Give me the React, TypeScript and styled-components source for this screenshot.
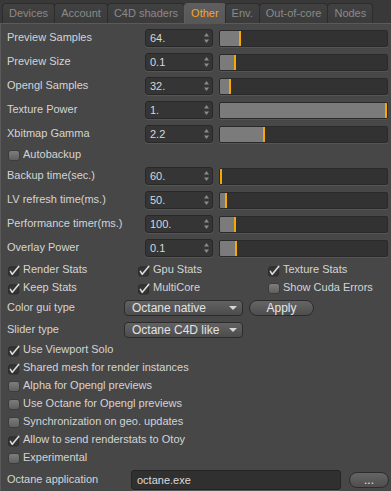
import React from 'react';
import styled, { createGlobalStyle } from 'styled-components';

const Global = createGlobalStyle`
  html, body { margin: 0; padding: 0; background: #474747; }
  body { font-family: "Liberation Sans", Arial, Helvetica, sans-serif; font-size: 11px; }
  * { box-sizing: border-box; }
`;

const Frame = styled.div`
  width: 391px;
  height: 491px;
  overflow: hidden;
  display: flex;
  flex-direction: column;
  background: #474747;
`;

const TabBar = styled.div`
  height: 24px;
  flex: none;
  display: flex;
  align-items: flex-end;
  padding-left: 2px;
  background: #393939;
  border-bottom: 1px solid #5a5a5a;
`;

const Tab = styled.div<{ $active?: boolean }>`
  height: ${p => (p.$active ? 21 : 20)}px;
  margin-bottom: ${p => (p.$active ? -1 : 0)}px;
  padding: 0 6px;
  border: 1px solid ${p => (p.$active ? '#5e5e5e' : '#2c2c2c')};
  border-bottom: 0;
  border-radius: 4px 4px 0 0;
  background: ${p => (p.$active ? 'linear-gradient(#5e5e5e, #575757)' : 'linear-gradient(#414141, #3b3b3b)')};
  color: ${p => (p.$active ? '#f6a623' : '#8a8a8a')};
  font-size: 11px;
  line-height: 19px;
  white-space: nowrap;
  & + & { margin-left: -1px; }
`;

const Panel = styled.div`
  flex: 1;
  display: flex;
  flex-direction: column;
  padding: 2px 4px 0 6px;
  border-left: 1px solid #5a5a5a;
`;

const Label = styled.span`
  color: #d4d4d4;
  white-space: nowrap;
  padding-bottom: 3px;
`;

const SliderRowBox = styled.div`
  height: 24px;
  display: grid;
  grid-template-columns: 138px 68px 175px;
  align-items: center;
`;

const NumberBox = styled.div`
  height: 18px;
  display: flex;
  align-items: center;
  justify-content: space-between;
  padding: 0 3px 0 4px;
  background: #353535;
  border: 1px solid #282828;
  border-radius: 3px;
  box-shadow: 0 1px 0 #555555;
  color: #d8d8d8;
`;

const Track = styled.div`
  margin-left: 6px;
  height: 17px;
  width: 169px;
  background: #323232;
  border: 1px solid #2a2a2a;
  border-radius: 2px;
  box-shadow: 0 1px 0 #555555;
  overflow: hidden;
  display: flex;
`;

const Fill = styled.div`
  height: 100%;
  background: #7b7b7b;
  border-right: 2px solid #f7a900;
`;

const CheckRowBox = styled.div`
  height: 18px;
  display: flex;
  align-items: center;
  gap: 3px;
  padding-left: 1px;
`;

const CheckGrid = styled.div`
  margin-top: 1px;
  display: grid;
  grid-template-columns: 130px 130px 120px;
`;

const BoxUnchecked = styled.span`
  width: 12px;
  height: 11px;
  border-radius: 3px;
  background: linear-gradient(#7d7d7d, #5f5f5f);
  border: 1px solid #3c3c3c;
  flex: none;
`;

const BoxChecked = styled.span`
  width: 12px;
  height: 11px;
  flex: none;
  display: flex;
`;

const ComboRowBox = styled.div`
  height: 22px;
  display: grid;
  grid-template-columns: 117px 119px 71px;
  align-items: center;
`;

const Dropdown = styled.div`
  height: 16px;
  display: flex;
  align-items: center;
  justify-content: space-between;
  padding: 0 5px 0 7px;
  background: linear-gradient(#626262, #4c4c4c);
  border: 1px solid #2c2c2c;
  border-radius: 4px;
  color: #e2e2e2;
  font-size: 12px;
`;

const PillButton = styled.div<{ $w: number; $gap: number }>`
  width: ${p => p.$w}px;
  margin-left: ${p => p.$gap}px;
  height: 16px;
  display: flex;
  align-items: center;
  justify-content: center;
  background: linear-gradient(#656565, #4e4e4e);
  border: 1px solid #2c2c2c;
  border-radius: 8px;
  color: #e6e6e6;
  font-size: 12px;
`;

const AppRowBox = styled.div`
  height: 26px;
  display: grid;
  grid-template-columns: 124px 210px 48px;
  align-items: center;
`;

const TextField = styled.div`
  height: 20px;
  display: flex;
  align-items: center;
  padding-left: 5px;
  background: #303030;
  border: 1px solid #242424;
  border-radius: 3px;
  box-shadow: 0 1px 0 #555555;
  color: #dcdcdc;
`;

const Spinner = () => (
  <svg width="5" height="10" viewBox="0 0 5 10">
    <path d="M2.5 0 L5 3.5 L0 3.5 Z" fill="#8a8a8a" />
    <path d="M0 6.5 L5 6.5 L2.5 10 Z" fill="#8a8a8a" />
  </svg>
);

const Arrow = () => (
  <svg width="8" height="4" viewBox="0 0 8 4">
    <path d="M0 0 L8 0 L4 4 Z" fill="#d6d6d6" />
  </svg>
);

const Check: React.FC<{ on: boolean }> = ({ on }) =>
  on ? (
    <BoxChecked>
      <svg width="13" height="12" viewBox="0 0 13 12">
        <rect x="0.5" y="1.5" width="11" height="10" rx="2.5" fill="#343434" stroke="#2a2a2a" />
        <path d="M2.6 6.4 L4.6 9.6 L11.6 1" stroke="#dedede" strokeWidth="1.7" fill="none" strokeLinecap="round" strokeLinejoin="round" />
      </svg>
    </BoxChecked>
  ) : (
    <BoxUnchecked />
  );

const CheckItem: React.FC<{ on: boolean; label: string }> = ({ on, label }) => (
  <CheckRowBox>
    <Check on={on} />
    <Label>{label}</Label>
  </CheckRowBox>
);

const SliderRow: React.FC<{ label: string; value: string; fill: number }> = ({ label, value, fill }) => (
  <SliderRowBox>
    <Label>{label}</Label>
    <NumberBox>
      <span>{value}</span>
      <Spinner />
    </NumberBox>
    <Track>
      <Fill style={{ width: fill >= 167 ? '100%' : `${fill}px` }} />
    </Track>
  </SliderRowBox>
);

const tabs = ['Devices', 'Account', 'C4D shaders', 'Other', 'Env.', 'Out-of-core', 'Nodes'];

const sliders1 = [
  { label: 'Preview Samples', value: '64.', fill: 21 },
  { label: 'Preview Size', value: '0.1', fill: 16 },
  { label: 'Opengl Samples', value: '32.', fill: 11 },
  { label: 'Texture Power', value: '1.', fill: 167 },
  { label: 'Xbitmap Gamma', value: '2.2', fill: 45 },
];

const sliders2 = [
  { label: 'Backup time(sec.)', value: '60.', fill: 2 },
  { label: 'LV refresh time(ms.)', value: '50.', fill: 7 },
  { label: 'Performance timer(ms.)', value: '100.', fill: 16 },
  { label: 'Overlay Power', value: '0.1', fill: 17 },
];

const grid = [
  { label: 'Render Stats', on: true },
  { label: 'Gpu Stats', on: true },
  { label: 'Texture Stats', on: true },
  { label: 'Keep Stats', on: true },
  { label: 'MultiCore', on: true },
  { label: 'Show Cuda Errors', on: false },
];

const lowerChecks = [
  { label: 'Use Viewport Solo', on: true },
  { label: 'Shared mesh for render instances', on: true },
  { label: 'Alpha for Opengl previews', on: false },
  { label: 'Use Octane for Opengl previews', on: false },
  { label: 'Synchronization on geo. updates', on: false },
  { label: 'Allow to send renderstats to Otoy', on: true },
  { label: 'Experimental', on: false },
];

export default function App() {
  return (
    <>
      <Global />
      <Frame>
        <TabBar>
          {tabs.map(t => (
            <Tab key={t} $active={t === 'Other'}>
              {t}
            </Tab>
          ))}
        </TabBar>
        <Panel>
          {sliders1.map(s => (
            <SliderRow key={s.label} {...s} />
          ))}
          <CheckItem on={false} label="Autobackup" />
          {sliders2.map(s => (
            <SliderRow key={s.label} {...s} />
          ))}
          <CheckGrid>
            {grid.map(g => (
              <CheckItem key={g.label} on={g.on} label={g.label} />
            ))}
          </CheckGrid>
          <ComboRowBox>
            <Label>Color gui type</Label>
            <Dropdown>
              <span>Octane native</span>
              <Arrow />
            </Dropdown>
            <PillButton $w={65} $gap={6}>Apply</PillButton>
          </ComboRowBox>
          <ComboRowBox>
            <Label>Slider type</Label>
            <Dropdown>
              <span>Octane C4D like</span>
              <Arrow />
            </Dropdown>
          </ComboRowBox>
          {lowerChecks.map(c => (
            <CheckItem key={c.label} on={c.on} label={c.label} />
          ))}
          <AppRowBox>
            <Label>Octane application</Label>
            <TextField>octane.exe</TextField>
            <PillButton $w={40} $gap={8}>...</PillButton>
          </AppRowBox>
        </Panel>
      </Frame>
    </>
  );
}
